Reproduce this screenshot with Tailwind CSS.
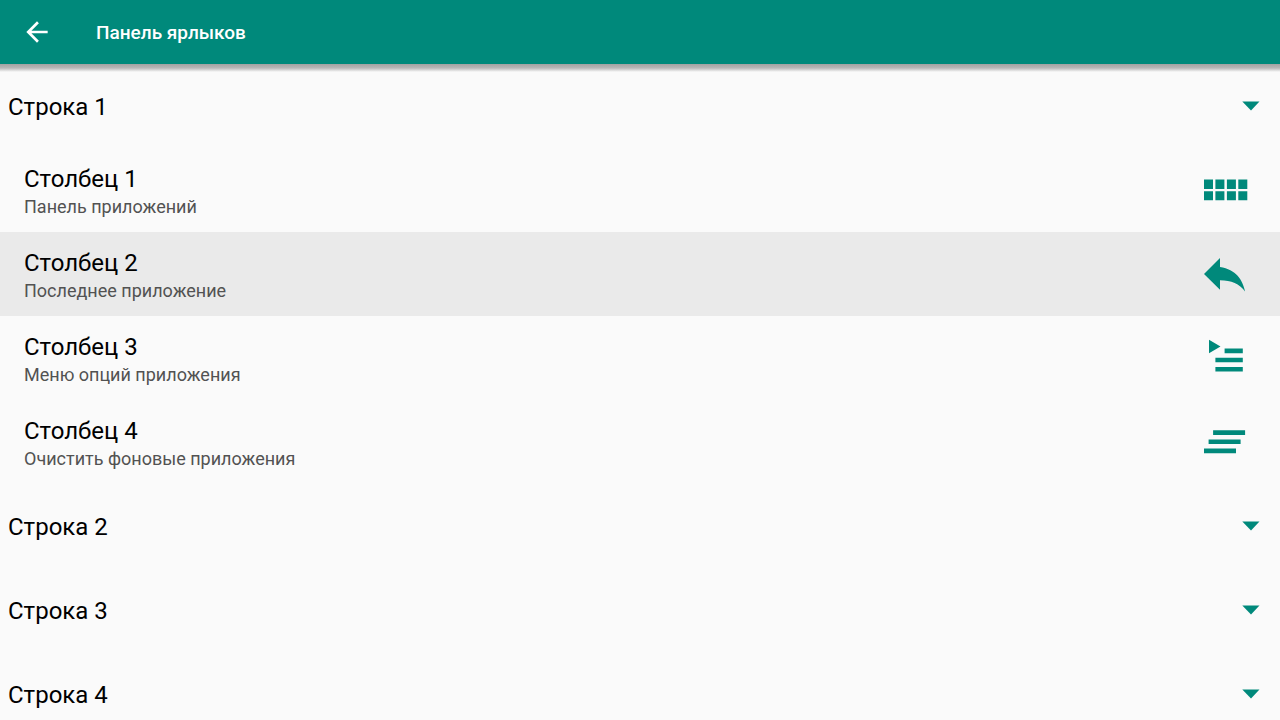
<!DOCTYPE html>
<html lang="ru">
<head>
    <meta charset="UTF-8">
    <meta name="viewport" content="width=device-width, initial-scale=1.0">
    <title>Панель ярлыков</title>
    <script src="https://cdn.jsdelivr.net/npm/@tailwindcss/browser@4"></script>
</head>
<body class="h-screen overflow-hidden flex flex-col bg-[#fafafa] text-black font-['Roboto',sans-serif]">

    <header class="relative z-10 shrink-0 h-16 flex items-center bg-[#00897b] text-white">
        <button type="button" aria-label="Назад" class="w-24 h-16 pl-[21px] flex items-center">
            <svg class="w-8 h-8" viewBox="0 0 24 24" fill="currentColor">
                <path d="M20 11H7.83l5.59-5.59L12 4l-8 8 8 8 1.41-1.41L7.83 13H20v-2z" />
            </svg>
        </button>
        <h1 class="pt-0.5 text-[19px] font-medium">Панель ярлыков</h1>
        <!-- Toolbar shadow -->
        <div class="absolute top-full inset-x-0 h-2 bg-linear-to-b from-[#a2a2a2] via-[#b8b8b8] to-[#fafafa]"></div>
    </header>

    <main class="flex-1 min-h-0 overflow-hidden">
        <section>
            <button type="button" aria-expanded="true" class="w-full h-21 pl-2 pr-5 flex items-center justify-between text-left">
                <span class="pt-0.5 text-2xl">Строка 1</span>
                <svg class="w-[18px] h-3" viewBox="0 0 18 12" fill="#00897b"><path d="M0.3 1.5h17.2L9 10.5z" /></svg>
            </button>
            <ul>
                <li>
                    <button type="button" class="w-full h-21 pl-6 pr-8 flex items-center justify-between text-left">
                        <span class="flex flex-col pt-1.5">
                            <span class="text-2xl leading-7">Столбец 1</span>
                            <span class="text-lg leading-7 text-[#525252]">Панель приложений</span>
                        </span>
                        <svg class="w-12 h-12" viewBox="0 0 48 48" fill="#00897b">
                            <path d="M4 13.5h9V23H4zM15.4 13.5h9V23h-9zM26.9 13.5h9V23h-9zM38.3 13.5h9V23h-9zM4 25.2h9v9H4zM15.4 25.2h9v9h-9zM26.9 25.2h9v9h-9zM38.3 25.2h9v9h-9z" />
                        </svg>
                    </button>
                </li>
                <li>
                    <button type="button" class="w-full h-21 pl-6 pr-8 flex items-center justify-between text-left bg-[#eaeaea]">
                        <span class="flex flex-col pt-1.5">
                            <span class="text-2xl leading-7">Столбец 2</span>
                            <span class="text-lg leading-7 text-[#525252]">Последнее приложение</span>
                        </span>
                        <svg class="w-12 h-12" viewBox="0 0 48 48" fill="#00897b">
                            <path d="M20 17V8L4 24l16 15.7v-9.4c11.4 0 19.4 3.4 25.1 11.2C42.8 30 36 19.3 20 17z" />
                        </svg>
                    </button>
                </li>
                <li>
                    <button type="button" class="w-full h-21 pl-6 pr-8 flex items-center justify-between text-left">
                        <span class="flex flex-col pt-1.5">
                            <span class="text-2xl leading-7">Столбец 3</span>
                            <span class="text-lg leading-7 text-[#525252]">Меню опций приложения</span>
                        </span>
                        <svg class="w-12 h-12" viewBox="0 0 48 48" fill="#00897b">
                            <path d="M9 5.7l11.5 6.8L9 19.3zM24.6 14.6h18.2v4.6H24.6zM15.4 23.7h27.4v4.6H15.4zM15.4 32.9h27.4v4.6H15.4z" />
                        </svg>
                    </button>
                </li>
                <li>
                    <button type="button" class="w-full h-21 pl-6 pr-8 flex items-center justify-between text-left">
                        <span class="flex flex-col pt-1.5">
                            <span class="text-2xl leading-7">Столбец 4</span>
                            <span class="text-lg leading-7 text-[#525252]">Очистить фоновые приложения</span>
                        </span>
                        <svg class="w-12 h-12" viewBox="0 0 48 48" fill="#00897b">
                            <path d="M13.1 12.3h32v4.6h-32zM8.6 21.4h32V26h-32zM4 30.6h32v4.6H4z" />
                        </svg>
                    </button>
                </li>
            </ul>
        </section>

        <section>
            <button type="button" aria-expanded="false" class="w-full h-21 pl-2 pr-5 flex items-center justify-between text-left">
                <span class="pt-0.5 text-2xl">Строка 2</span>
                <svg class="w-[18px] h-3" viewBox="0 0 18 12" fill="#00897b"><path d="M0.3 1.5h17.2L9 10.5z" /></svg>
            </button>
        </section>

        <section>
            <button type="button" aria-expanded="false" class="w-full h-21 pl-2 pr-5 flex items-center justify-between text-left">
                <span class="pt-0.5 text-2xl">Строка 3</span>
                <svg class="w-[18px] h-3" viewBox="0 0 18 12" fill="#00897b"><path d="M0.3 1.5h17.2L9 10.5z" /></svg>
            </button>
        </section>

        <section>
            <button type="button" aria-expanded="false" class="w-full h-21 pl-2 pr-5 flex items-center justify-between text-left">
                <span class="pt-0.5 text-2xl">Строка 4</span>
                <svg class="w-[18px] h-3" viewBox="0 0 18 12" fill="#00897b"><path d="M0.3 1.5h17.2L9 10.5z" /></svg>
            </button>
        </section>
    </main>

</body>
</html>
